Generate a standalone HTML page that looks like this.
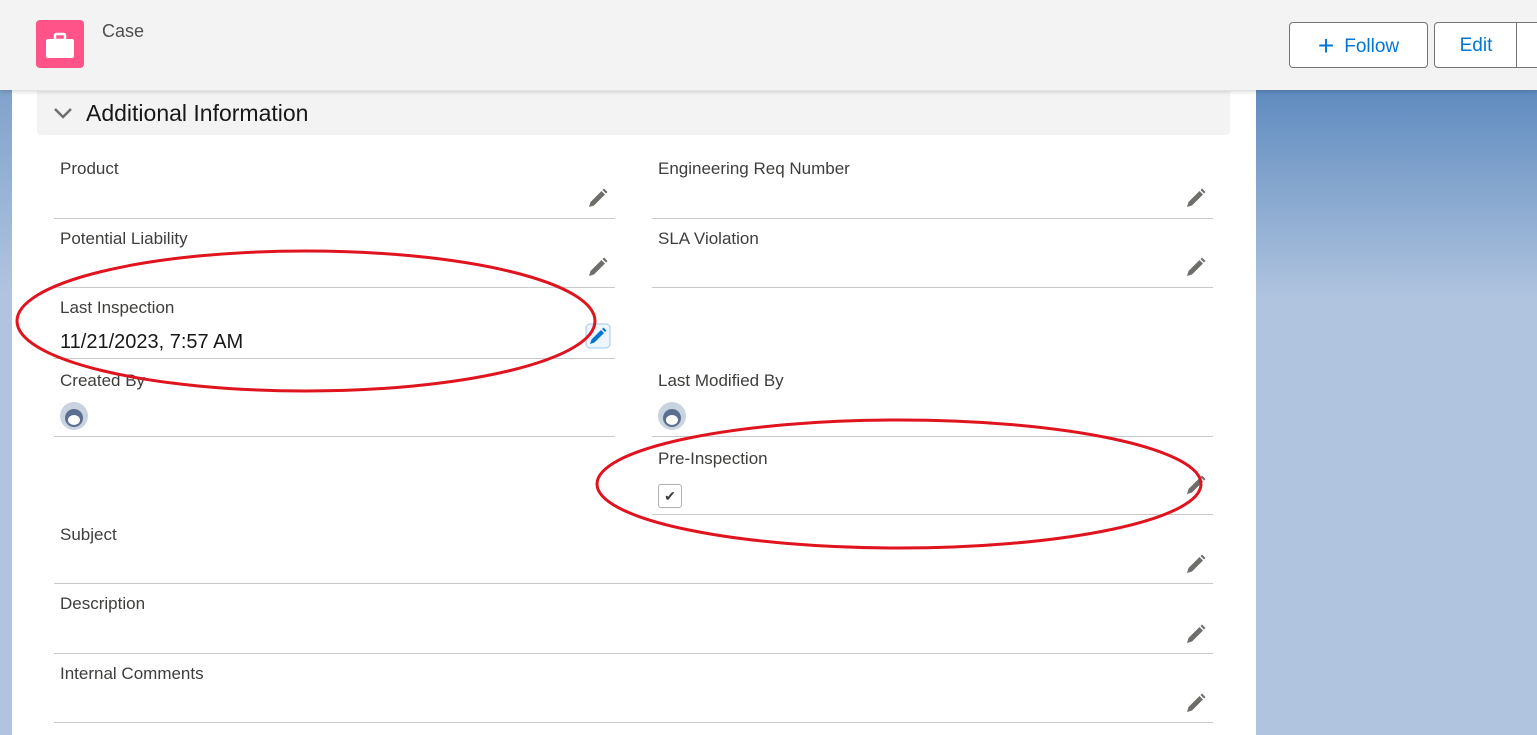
<!DOCTYPE html>
<html><head><style>
*{margin:0;padding:0;box-sizing:border-box}
body{width:1537px;height:735px;overflow:hidden;font-family:"Liberation Sans",sans-serif;background:#b0c4df;position:relative}
.bgl{position:absolute;left:0;top:0;width:12px;height:735px;background:linear-gradient(#6a93c4,#b0c4df 40%)}
.bgr{position:absolute;left:1256px;top:0;width:281px;height:735px;background:linear-gradient(#5f8bbf 90px,#b0c4df 300px)}
.card{position:absolute;left:12px;top:0;width:1244px;height:735px;background:#fff}
.hdr{position:absolute;left:0;top:0;width:1537px;height:90px;background:#f3f3f3;box-shadow:0 2px 4px rgba(0,0,0,.15);z-index:2}
.icon{position:absolute;left:36px;top:20px;width:48px;height:48px;border-radius:4px;background:#ff538a}
.case{position:absolute;left:102px;top:21px;font-size:18px;color:#514f4d}
.btn{position:absolute;top:22px;height:46px;border:1px solid #747474;border-radius:4px;background:#fff;color:#0176d3;font-size:19px;line-height:46px;text-align:center}
.sec{position:absolute;left:37px;top:91px;width:1193px;height:44px;background:#f3f3f3;border-radius:0 0 4px 4px}
.sec span{position:absolute;left:49px;top:9px;font-size:23px;color:#181818}
.f{position:absolute;height:70px;border-bottom:1px solid #c9c9c9}
.f .l{position:absolute;left:6px;top:0;font-size:17px;color:#3e3e3c}
.f .v{position:absolute;left:6px;top:31px;font-size:20px;color:#181818}
.L{left:54px;width:561px}.R{left:652px;width:561px}.W{left:54px;width:1159px}
</style></head><body>
<div class="bgl"></div><div class="bgr"></div>
<div class="card"></div>
<div class="hdr">
<div class="icon"><svg width="48" height="48"><rect x="19" y="14" width="10" height="6" rx="1.5" fill="none" stroke="#fff" stroke-width="2.5"/><rect x="10" y="19" width="28" height="19" rx="2" fill="#fff"/></svg></div>
<div class="case">Case</div>
<div class="btn" style="left:1289px;width:139px"><span style="font-size:28px;vertical-align:-3px;margin-right:10px">+</span>Follow</div>
<div class="btn" style="left:1434px;width:120px;border-radius:4px 0 0 4px"><span style="position:absolute;left:0;width:82px">Edit</span><span style="position:absolute;left:81px;top:0;width:1px;height:44px;background:#747474"></span></div>
</div>
<div class="sec"><svg style="position:absolute;left:16px;top:15px" width="20" height="14"><path d="M2 3l8 8 8-8" fill="none" stroke="#706e6b" stroke-width="2.5"/></svg><span>Additional Information</span></div>

<div class="f L" style="top:149px"><div class="l" style="top:10px">Product</div></div>
<div class="f R" style="top:149px"><div class="l" style="top:10px">Engineering Req Number</div></div>
<div class="f L" style="top:218px"><div class="l" style="top:11px">Potential Liability</div></div>
<div class="f R" style="top:218px"><div class="l" style="top:11px">SLA Violation</div></div>
<div class="f L" style="top:289px"><div class="l" style="top:9px">Last Inspection</div><div class="v" style="top:42px">11/21/2023, 7:57 AM</div></div>
<div class="f L" style="top:367px"><div class="l" style="top:4px">Created By</div></div>
<div class="f R" style="top:367px"><div class="l" style="top:4px">Last Modified By</div></div>
<div class="f R" style="top:445px"><div class="l" style="top:4px">Pre-Inspection</div>
<div style="position:absolute;left:6px;top:39px;width:24px;height:24px;border:1px solid #b0b0b0;border-radius:3px;font-size:14px;text-align:center;line-height:22px;color:#3e3e3c">✔</div></div>
<div class="f W" style="top:514px"><div class="l" style="top:11px">Subject</div></div>
<div class="f W" style="top:584px"><div class="l" style="top:10px">Description</div></div>
<div class="f W" style="top:653px"><div class="l" style="top:11px">Internal Comments</div></div>

<svg style="position:absolute;left:0;top:0" width="1537" height="735">
<defs><path id="pc" d="M0 18l1.5-5 11-11 3.5 3.5-11 11z M13.5 1l1.5-1.5 3.5 3.5-1.5 1.5z" fill="#706e6b"/></defs>
<use href="#pc" x="589" y="189"/><use href="#pc" x="1187" y="189"/>
<use href="#pc" x="589" y="258"/><use href="#pc" x="1187" y="258"/>
<use href="#pc" x="1187" y="476"/><use href="#pc" x="1187" y="555"/>
<use href="#pc" x="1187" y="625"/><use href="#pc" x="1187" y="694"/>
<rect x="586" y="324" width="24" height="24" rx="4" fill="#eef5fd" stroke="#9cc8f0"/>
<path d="M590 344l1.5-4.5 9.5-9.5 3 3-9.5 9.5z M602 329l1.5-1.5 3 3-1.5 1.5z" fill="#0176d3"/>
<g><circle cx="74" cy="416" r="14" fill="#c9d3e0"/><circle cx="74" cy="418" r="9" fill="#5a6f8f"/><ellipse cx="74" cy="420" rx="6" ry="5" fill="#fff"/></g>
<g><circle cx="672" cy="416" r="14" fill="#c9d3e0"/><circle cx="672" cy="418" r="9" fill="#5a6f8f"/><ellipse cx="672" cy="420" rx="6" ry="5" fill="#fff"/></g>
<ellipse cx="306" cy="321" rx="289" ry="70" fill="none" stroke="#e0141e" stroke-width="3"/>
<ellipse cx="899" cy="484" rx="302" ry="64" fill="none" stroke="#e0141e" stroke-width="3"/>
</svg>
</body></html>
